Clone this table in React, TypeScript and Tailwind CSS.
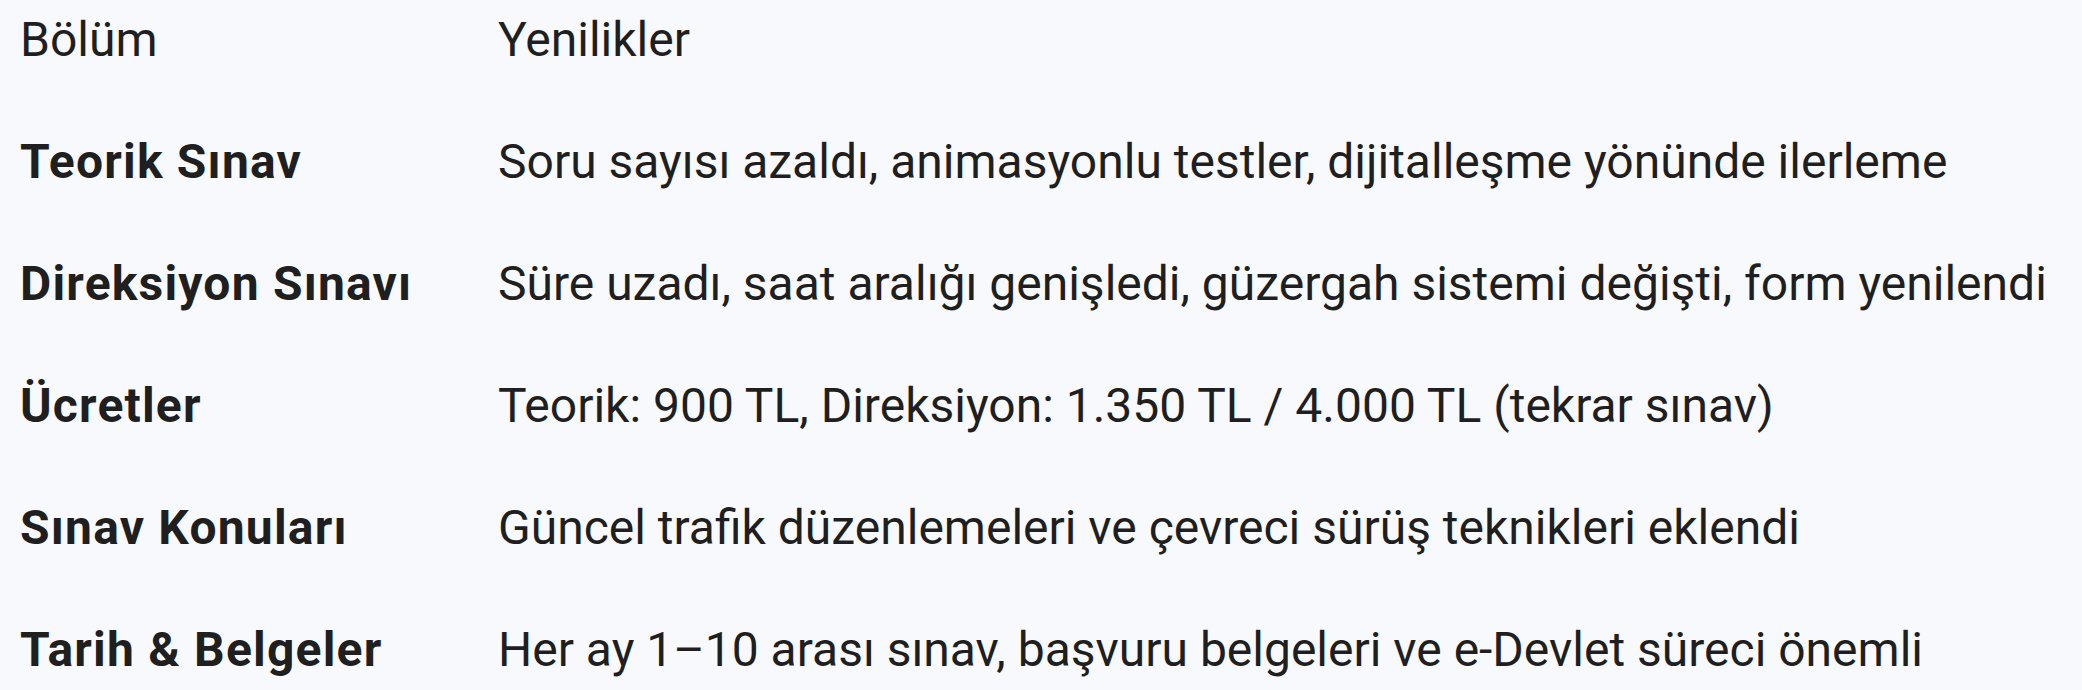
const rows = [
  {
    section: "Teorik Sınav",
    news: "Soru sayısı azaldı, animasyonlu testler, dijitalleşme yönünde ilerleme",
  },
  {
    section: "Direksiyon Sınavı",
    news: "Süre uzadı, saat aralığı genişledi, güzergah sistemi değişti, form yenilendi",
  },
  {
    section: "Ücretler",
    news: "Teorik: 900 TL, Direksiyon: 1.350 TL / 4.000 TL (tekrar sınav)",
  },
  {
    section: "Sınav Konuları",
    news: "Güncel trafik düzenlemeleri ve çevreci sürüş teknikleri eklendi",
  },
  {
    section: "Tarih & Belgeler",
    news: "Her ay 1–10 arası sınav, başvuru belgeleri ve e-Devlet süreci önemli",
  },
];

const App = () => {
  return (
    <div className="w-[2082px] h-[690px] overflow-hidden bg-[#f8f9fc] text-[#1f1f1f] font-['Roboto',sans-serif] text-[48px] leading-none pl-5">
      <div className="grid grid-cols-[478px_1fr] h-20 items-center">
        <div>Bölüm</div>
        <div>Yenilikler</div>
      </div>
      <div className="pt-[21px]">
        {rows.map((row) => (
          <div key={row.section} className="grid grid-cols-[478px_1fr] h-[122px] items-center">
            <div className="font-bold tracking-[1.2px] whitespace-nowrap">{row.section}</div>
            <div className="whitespace-nowrap">{row.news}</div>
          </div>
        ))}
      </div>
    </div>
  );
};

export default App;
